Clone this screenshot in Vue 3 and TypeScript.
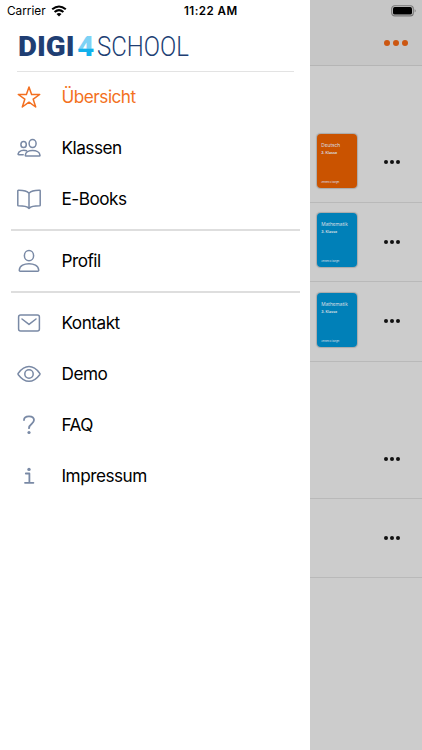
<script setup lang="ts">
type IconName = 'star' | 'people' | 'book' | 'person' | 'mail' | 'eye' | 'question' | 'info'
interface MenuItem { label: string; icon: IconName; active?: boolean }
interface Row { kind: string; subject?: string; grade?: string }

const groups: MenuItem[][] = [
  [
    { label: 'Übersicht', icon: 'star', active: true },
    { label: 'Klassen', icon: 'people' },
    { label: 'E-Books', icon: 'book' },
  ],
  [{ label: 'Profil', icon: 'person' }],
  [
    { label: 'Kontakt', icon: 'mail' },
    { label: 'Demo', icon: 'eye' },
    { label: 'FAQ', icon: 'question' },
    { label: 'Impressum', icon: 'info' },
  ],
]

const books: Row[] = [
  { kind: 'orange', subject: 'Deutsch', grade: '3. Klasse' },
  { kind: 'blue', subject: 'Mathematik', grade: '3. Klasse' },
  { kind: 'blue', subject: 'Mathematik', grade: '3. Klasse' },
]
</script>

<template>
  <div class="screen">
    <aside class="drawer">
      <div class="status">
        <span class="carrier">Carrier</span>
        <svg class="wifi" viewBox="0 0 16 12" width="16" height="12">
          <path d="M1.2 4.3Q8 -1.3 14.8 4.3M3.6 7Q8 3.2 12.4 7" fill="none" stroke="#000" stroke-width="2.1" />
          <path d="M5.5 8.9Q8 6.9 10.5 8.9L8 11.5Z" />
        </svg>
        <span class="time">11:22 AM</span>
      </div>
      <div class="brand">
        <svg width="220" height="36" viewBox="0 -6 220 36">
          <defs>
            <linearGradient id="four" gradientUnits="userSpaceOnUse" x1="0" y1="2" x2="0" y2="22">
              <stop offset="0.62" stop-color="#7dd2f5" />
              <stop offset="0.64" stop-color="#12b1ec" />
            </linearGradient>
          </defs>
          <text class="bold" x="0" y="21.7" textLength="56.5" lengthAdjust="spacingAndGlyphs">DIGI</text>
          <text class="bold four" x="59.2" y="21.7" textLength="17" lengthAdjust="spacingAndGlyphs">4</text>
          <text class="thin" x="79" y="21.7" textLength="92" lengthAdjust="spacingAndGlyphs">SCHOOL</text>
        </svg>
      </div>
      <nav>
        <ul v-for="(group, g) in groups" :key="g" class="group">
          <li v-for="item in group" :key="item.label" class="item" :class="{ active: item.active }">
            <svg class="icon" viewBox="0 0 24 24" width="24" height="24">
              <path v-if="item.icon === 'star'" d="M12 2L14.6 9.5H22.7L16.2 14.2L18.7 22L12 17.2L5.3 22L7.8 14.2L1.3 9.5H9.4Z" />
              <g v-else-if="item.icon === 'people'">
                <ellipse cx="15.6" cy="7.6" rx="3.5" ry="4" />
                <ellipse cx="6.6" cy="8.5" rx="2.7" ry="3.1" />
                <path d="M8.3 19.4C8.7 12.9 22.4 12.9 23 19.4Q23 20 22.3 20H9Q8.3 20 8.3 19.4ZM9.6 14.7C6.3 13.3 1.6 14.7 1 18.1Q1 18.7 1.7 18.7H6.2" />
              </g>
              <path v-else-if="item.icon === 'book'" d="M12 6.2C10 4 6 3.2 1.3 3.3Q.8 3.3.8 3.8V18.2Q.8 18.8 1.4 18.8C6.3 18.8 9.7 19 12 21.4C14.3 19 17.7 18.8 22.6 18.8Q23.2 18.8 23.2 18.2V3.8Q23.2 3.3 22.7 3.3C18 3.2 14 4 12 6.2V21.4" />
              <g v-else-if="item.icon === 'person'">
                <ellipse cx="12" cy="6.7" rx="4.6" ry="5.1" />
                <path d="M2.3 21C3 12.5 21 12.5 21.7 21Q21.8 22.2 20.8 22.2H3.2Q2.2 22.2 2.3 21Z" />
              </g>
              <g v-else-if="item.icon === 'mail'">
                <rect x="1.6" y="4.1" width="20.8" height="16" rx="2" />
                <path d="M5 8L12 13.4L19 8" />
              </g>
              <g v-else-if="item.icon === 'eye'">
                <path d="M1.3 12.7C.7 11.9.8 11.8 1.3 11.2C4.3 7.3 8 4.6 12 4.6S19.7 7.3 22.7 11.2C23.2 11.8 23.2 12 22.7 12.7C19.7 16.7 16 19.3 12 19.3S4.3 16.7 1.3 12.7Z" />
                <circle cx="12" cy="12" r="4.2" />
              </g>
              <g v-else-if="item.icon === 'question'">
                <path class="heavy" d="M7 7C7.2 1.9 17 2.2 17 7.1C17 11.2 12 10.8 12 15.2" />
                <circle class="fill" cx="12" cy="19.5" r="1.6" />
              </g>
              <g v-else>
                <path class="heavy" d="M8.8 9.5H12.4V18.8M8 18.8H16.4" />
                <circle class="fill" cx="12" cy="5.4" r="1.7" />
              </g>
            </svg>
            <span class="label">{{ item.label }}</span>
          </li>
        </ul>
      </nav>
    </aside>

    <main class="page">
      <header class="topbar">
        <svg class="battery" width="26" height="12" viewBox="0 0 26 12">
          <rect x="0.7" y="0.7" width="21.6" height="10.2" rx="3" fill="none" stroke="#777" stroke-width="1.1" />
          <rect x="2" y="2" width="19" height="7.6" rx="1.7" />
          <path d="M23.7 4Q25.6 5.8 23.7 7.6Z" fill="#777" />
        </svg>
        <div class="dots large"><i /><i /><i /></div>
      </header>
      <section class="list first">
        <div v-for="(book, b) in books" :key="b" class="row">
          <div class="cover" :class="book.kind">
            <svg width="40" height="54" viewBox="0 0 40 54">
              <text x="4.3" y="13" class="subject">{{ book.subject }}</text>
              <text x="4.3" y="20.4" class="grade">{{ book.grade }}</text>
              <text x="4.3" y="49.3" class="foot" textLength="18">Lehrwerk &amp; Übungen</text>
            </svg>
          </div>
          <div class="dots"><i /><i /><i /></div>
        </div>
      </section>
      <section class="list second">
        <div v-for="n in 2" :key="n" class="row">
          <div class="dots"><i /><i /><i /></div>
        </div>
      </section>
    </main>
  </div>
</template>

<style>
body { background: #ccc; }
</style>

<style scoped>
.screen {
  display: grid;
  grid-template-columns: 309.5px 1fr;
  width: 422px;
  height: 750px;
  overflow: hidden;
  font-family: Inter, "Liberation Sans", sans-serif;
  color: #000;
}
.drawer { background: #fff; }
.status {
  display: flex;
  align-items: center;
  height: 22px;
  padding-left: 7px;
  box-sizing: border-box;
}
.carrier { font-size: 11.8px; width: 39px; white-space: nowrap; }
.wifi { margin-left: 5px; }
.time { margin-left: 117px; font-size: 11.6px; font-weight: 600; letter-spacing: 0.45px; white-space: nowrap; }
.brand {
  display: flex;
  height: 50px;
  margin: 0 16px 0 16.5px;
  padding: 6px 0 0 1px;
  box-sizing: border-box;
  border-bottom: 1px solid #e3e3e3;
}
.brand svg { overflow: visible; }
.brand text { font-family: Roboto, sans-serif; font-size: 27.4px; fill: #203e73; }
.brand .bold { font-weight: 900; }
.brand .four { fill: url(#four); }
.brand .thin { font-weight: 300; }
nav { margin-top: -0.5px; }
.group {
  margin: 0 10px 0 10.5px;
  padding: 4.5px 0;
  list-style: none;
  border-bottom: 2px solid #dedede;
}
.group:first-child { padding-top: 0; }
.group:last-child { border-bottom: 0; }
.item {
  display: flex;
  align-items: center;
  gap: 20.5px;
  height: 51px;
  padding-left: 6.5px;
  font-size: 17.2px;
  letter-spacing: -0.5px;
}
.label { line-height: 22px; margin-top: -1px; }
.icon { fill: none; stroke: #7989a5; stroke-width: 1.5; stroke-linejoin: round; stroke-linecap: round; }
.icon .heavy { stroke-width: 1.8; }
.icon .fill { fill: #7989a5; stroke: none; }
.active { color: #f37021; }
.active .icon { stroke: #f37021; }
.page { background: #ccc; }
.topbar {
  display: flex;
  flex-direction: column;
  align-items: flex-end;
  height: 66px;
  padding: 5px 5px 0 0;
  box-sizing: border-box;
  background: #c6c6c6;
  border-bottom: 1px solid #b5b5b5;
}
.dots { display: flex; gap: 1.7px; margin-left: auto; }
.dots i { width: 4px; height: 4px; border-radius: 50%; background: #111; }
.dots.large { gap: 3px; margin: 23px 8.7px 0 0; }
.dots.large i { width: 6px; height: 6px; background: #cc5711; }
.first { padding-top: 57px; }
.row {
  display: flex;
  align-items: center;
  height: 79.6px;
  padding: 0 22.3px 0 7.8px;
  box-sizing: border-box;
  border-bottom: 1px solid #b9b9b9;
}
.cover { width: 39.5px; height: 54px; border-radius: 4px; overflow: hidden; box-shadow: 0 0 1px 0.5px #aaa; margin-top: -3px; }
.orange { background: #ca5300; }
.blue { background: #0080b8; }
.cover text { fill: #d8dfe3; }
.subject { font-size: 4.8px; }
.grade { font-size: 3.6px; font-weight: 600; }
.foot { font-size: 2.1px; }
.second { padding-top: 57.5px; }
</style>
